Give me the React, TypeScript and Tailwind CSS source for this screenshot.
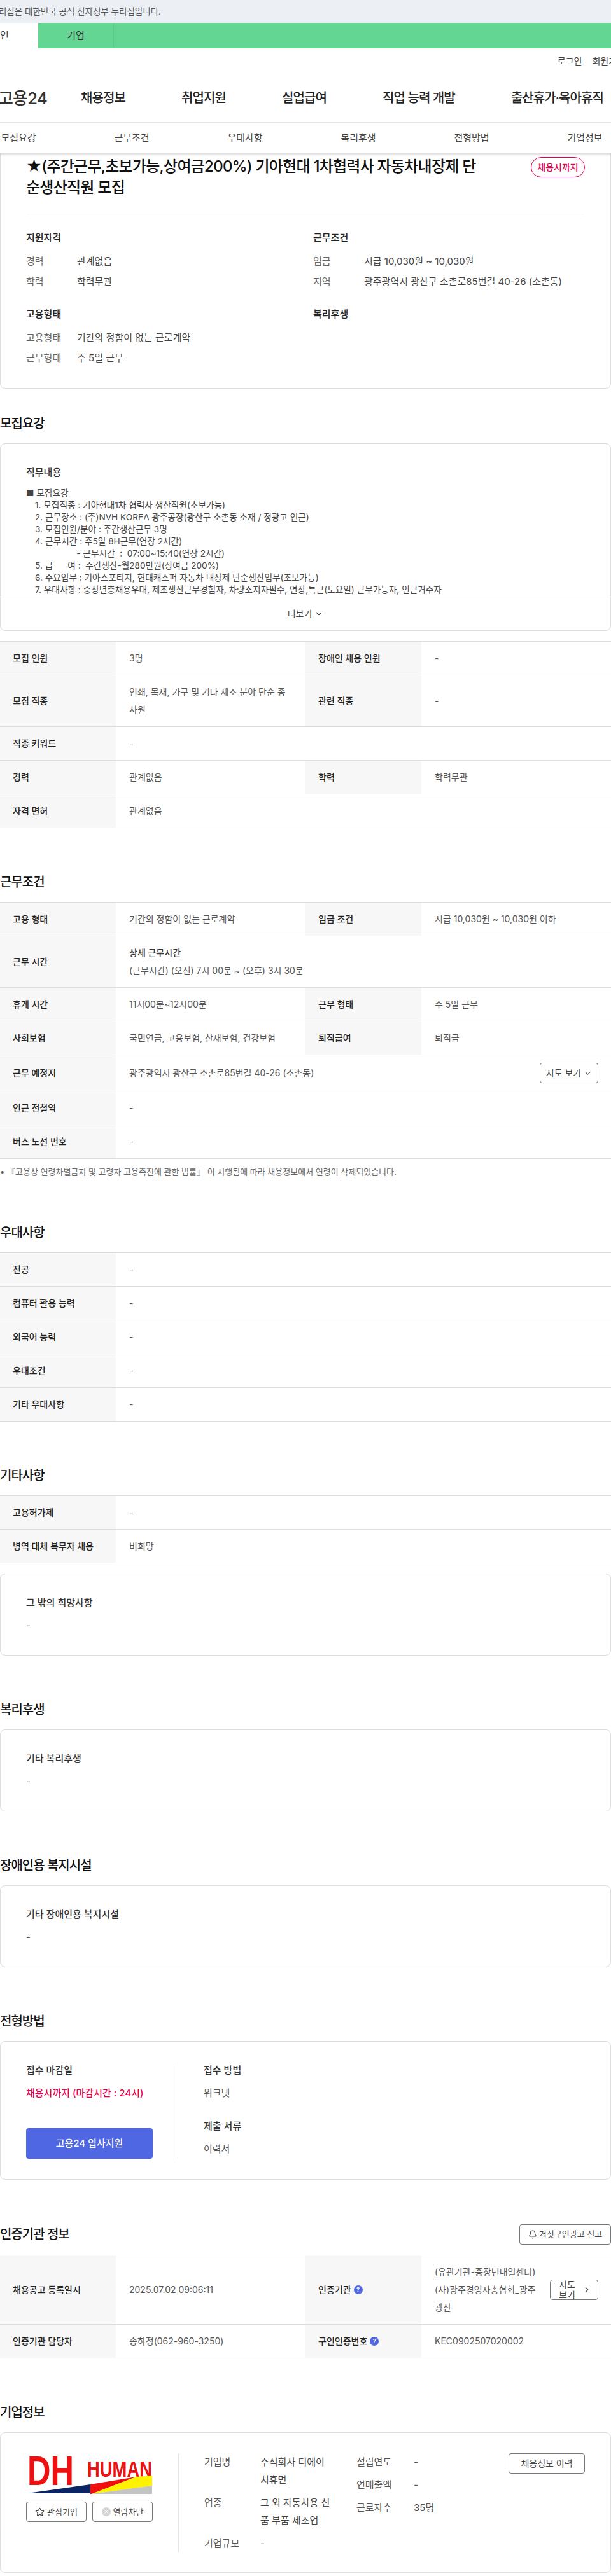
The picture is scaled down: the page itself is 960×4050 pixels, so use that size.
import type { ReactNode } from "react";
import { Bell, ChevronDown, ChevronRight, Star } from "lucide-react";

function Heading({ children, first }: { children: ReactNode; first?: boolean }) {
  return (
    <h2 className={`mb-4 flex h-[30px] items-center text-[20px] font-medium tracking-[-1px] text-[#111111] ${first ? "mt-10" : "mt-[70px]"}`}>
      {children}
    </h2>
  );
}

function Label({ children }: { children: ReactNode }) {
  return <div className="flex w-[182px] shrink-0 items-center gap-1 bg-[#f7f7f7] pl-5 text-sm font-medium text-[#222222]">{children}</div>;
}

function Value({ children, wide }: { children: ReactNode; wide?: boolean }) {
  return (
    <div className={`flex items-center pr-5 pl-[21px] text-sm leading-7 text-[#555555] ${wide ? "flex-1" : "w-[298px] shrink-0"}`}>
      {children}
    </div>
  );
}

function Row({ children, tall }: { children: ReactNode; tall?: boolean }) {
  return <div className={`flex border-b border-[#dddddd] ${tall ? "h-[81px]" : "h-[53px]"}`}>{children}</div>;
}

function Help() {
  return <span className="flex h-[14px] w-[14px] items-center justify-center rounded-full bg-[#4f67e3] text-[9px] font-bold text-white">?</span>;
}

function SimpleCard({ title }: { title: string }) {
  return (
    <div className="h-[129px] rounded-lg border border-[#dddddd] pt-8 pl-10 text-[15px] leading-[26px]">
      <p className="font-medium text-[#333333]">{title}</p>
      <p className="mt-[10px] text-[#555555]">-</p>
    </div>
  );
}

function SummaryItem({ label, value }: { label: string; value: string }) {
  return (
    <div className="flex h-8 items-center text-[15px]">
      <span className="w-20 text-[#666666]">{label}</span>
      <span className="text-[#444444]">{value}</span>
    </div>
  );
}

function CompanyLogo() {
  return (
    <svg viewBox="0 0 198 64" className="h-16 w-[198px]">
      <rect width="198" height="64" fill="#ffffff" />
      <text x="2" y="50" textLength="73" lengthAdjust="spacingAndGlyphs" fontFamily="Liberation Sans" fontWeight="700" fontSize="64" fill="#ee1111">DH</text>
      <text x="96" y="37" textLength="102" lengthAdjust="spacingAndGlyphs" fontFamily="Liberation Sans" fontWeight="700" fontSize="35" fill="#ee1111">HUMAN</text>
      <polygon points="2,63 101,49 101,63" fill="#0c2461" />
      <polygon points="101,49 173,37 103,64 101,64" fill="#f01010" />
      <polygon points="173,37 198,35 198,51 103,64" fill="#fff200" />
      <polygon points="198,51 198,64 103,64" fill="#c4c4c4" />
    </svg>
  );
}

const jobLines = [
  "1. 모집직종 : 기아현대1차 협력사 생산직원(초보가능)",
  "2. 근무장소 : (주)NVH KOREA 광주공장(광산구 소촌동 소재 / 정광고 인근)",
  "3. 모집인원/분야 : 주간생산근무 3명",
  "4. 근무시간 : 주5일 8H근무(연장 2시간)",
  "                 - 근무시간  :  07:00~15:40(연장 2시간)",
  "5. 급      여 :  주간생산-월280만원(상여금 200%)",
  "6. 주요업무 : 기아스포티지, 현대캐스퍼 자동차 내장제 단순생산업무(초보가능)",
  "7. 우대사항 : 중장년층채용우대, 제조생산근무경험자, 차량소지자필수, 연장,특근(토요일) 근무가능자, 인근거주자",
];

export default function App() {
  return (
    <div className="h-[4050px] w-[960px] overflow-hidden bg-white font-['Inter','Noto_Sans_CJK_KR',sans-serif] text-[#333333]">
      <div className="flex h-9 items-center bg-[#ecf0f5] text-[13.5px] text-[#555555]">
        <div className="flex w-[253px] justify-end whitespace-nowrap">누리집은 대한민국 공식 전자정부 누리집입니다.</div>
      </div>
      <div className="flex h-10 items-center bg-[#62d692] text-[15px]">
        <div className="-ml-[60px] flex h-full w-[120px] items-center justify-center bg-white">개인</div>
        <div className="flex h-full w-[119px] items-center justify-center border-r border-[#5acb88]">기업</div>
      </div>

      <header>
        <div className="-mr-[22px] flex h-10 items-center justify-end gap-4 text-sm text-[#444444]">
          <span>로그인</span>
          <span>회원가입</span>
        </div>
        <div className="flex h-[76px] items-center whitespace-nowrap text-[20px] font-medium tracking-[-0.9px] text-[#222222]">
          <div className="flex w-[74px] shrink-0 justify-end text-[26px] text-[#333333]">고용24</div>
          <nav className="ml-[53px] flex gap-[88px]">
            <span>채용정보</span>
            <span>취업지원</span>
            <span>실업급여</span>
            <span>직업 능력 개발</span>
            <span>출산휴가·육아휴직</span>
          </nav>
        </div>
      </header>

      <div className="relative z-10 flex h-[49px] items-center border-t border-[#e5e5e5] bg-white text-[15px] text-[#444444] shadow-[0_2px_3px_rgba(0,0,0,0.15)]">
        {["모집요강", "근무조건", "우대사항", "복리후생", "전형방법", "기업정보"].map((item, i) => (
          <span key={item} className={`w-[178px] shrink-0 text-center ${i === 0 ? "-ml-[60px]" : ""}`}>{item}</span>
        ))}
      </div>

      <section className="h-[370px] rounded-b-lg border-x border-b border-[#dddddd] px-10 pt-1">
        <div className="flex justify-between">
          <h1 className="w-[710px] text-2xl leading-[33px] font-medium tracking-[-0.75px] text-[#111111]">
            ★(주간근무,초보가능,상여금200%) 기아현대 1차협력사 자동차내장제 단순생산직원 모집
          </h1>
          <span className="mt-[2px] flex h-8 w-[85px] items-center justify-center rounded-full border border-[#e8004f] text-sm font-medium text-[#e8004f]">
            채용시까지
          </span>
        </div>
        <div className="mt-[25px] grid grid-cols-[451px_1fr] border-t border-[#eeeeee] pt-[25px]">
          <div>
            <h3 className="flex h-6 items-center text-[15px] font-medium text-[#222222]">지원자격</h3>
            <div className="mt-[9px]">
              <SummaryItem label="경력" value="관계없음" />
              <SummaryItem label="학력" value="학력무관" />
            </div>
            <h3 className="mt-[23px] flex h-6 items-center text-[15px] font-medium text-[#222222]">고용형태</h3>
            <div className="mt-[9px]">
              <SummaryItem label="고용형태" value="기간의 정함이 없는 근로계약" />
              <SummaryItem label="근무형태" value="주 5일 근무" />
            </div>
          </div>
          <div>
            <h3 className="flex h-6 items-center text-[15px] font-medium text-[#222222]">근무조건</h3>
            <div className="mt-[9px]">
              <SummaryItem label="임금" value="시급 10,030원 ~ 10,030원" />
              <SummaryItem label="지역" value="광주광역시 광산구 소촌로85번길 40-26 (소촌동)" />
            </div>
            <h3 className="mt-[23px] flex h-6 items-center text-[15px] font-medium text-[#222222]">복리후생</h3>
          </div>
        </div>
      </section>

      <Heading first>모집요강</Heading>
      <div className="h-[295px] rounded-lg border border-[#dddddd]">
        <div className="h-[240px] overflow-hidden pt-8 pl-10">
          <p className="text-[15px] leading-[26px] font-medium text-[#333333]">직무내용</p>
          <div className="mt-[10px] h-[172px] overflow-hidden text-[13.65px] leading-[19px] text-[#444444]">
            <p>■ 모집요강</p>
            {jobLines.map((line) => (
              <p key={line} className="pl-[14px] whitespace-pre">{line}</p>
            ))}
          </div>
        </div>
        <div className="flex h-[53px] items-center justify-center gap-1 border-t border-[#dddddd] text-sm text-[#444444]">
          더보기 <ChevronDown size={14} />
        </div>
      </div>

      <div className="mt-4 border-t border-[#dddddd]">
        <Row>
          <Label>모집 인원</Label>
          <Value>3명</Value>
          <Label>장애인 채용 인원</Label>
          <Value>-</Value>
        </Row>
        <Row tall>
          <Label>모집 직종</Label>
          <Value>
            <span>인쇄, 목재, 가구 및 기타 제조 분야 단순 종<br />사원</span>
          </Value>
          <Label>관련 직종</Label>
          <Value>-</Value>
        </Row>
        <Row>
          <Label>직종 키워드</Label>
          <Value wide>-</Value>
        </Row>
        <Row>
          <Label>경력</Label>
          <Value>관계없음</Value>
          <Label>학력</Label>
          <Value>학력무관</Value>
        </Row>
        <Row>
          <Label>자격 면허</Label>
          <Value wide>관계없음</Value>
        </Row>
      </div>

      <Heading>근무조건</Heading>
      <div className="border-t border-[#dddddd]">
        <Row>
          <Label>고용 형태</Label>
          <Value>기간의 정함이 없는 근로계약</Value>
          <Label>임금 조건</Label>
          <Value>시급 10,030원 ~ 10,030원 이하</Value>
        </Row>
        <Row tall>
          <Label>근무 시간</Label>
          <Value wide>
            <div>
              <p className="font-medium text-[#333333]">상세 근무시간</p>
              <p>(근무시간) (오전) 7시 00분 ~ (오후) 3시 30분</p>
            </div>
          </Value>
        </Row>
        <Row>
          <Label>휴게 시간</Label>
          <Value>11시00분~12시00분</Value>
          <Label>근무 형태</Label>
          <Value>주 5일 근무</Value>
        </Row>
        <Row>
          <Label>사회보험</Label>
          <Value>국민연금, 고용보험, 산재보험, 건강보험</Value>
          <Label>퇴직급여</Label>
          <Value>퇴직금</Value>
        </Row>
        <div className="flex h-[57px] border-b border-[#dddddd]">
          <Label>근무 예정지</Label>
          <Value wide>
            <span className="flex-1">광주광역시 광산구 소촌로85번길 40-26 (소촌동)</span>
            <button className="flex h-8 w-[92px] items-center justify-center gap-1 rounded border border-[#777777] text-sm text-[#444444]">
              지도 보기 <ChevronDown size={13} />
            </button>
          </Value>
        </div>
        <Row>
          <Label>인근 전철역</Label>
          <Value wide>-</Value>
        </Row>
        <Row>
          <Label>버스 노선 번호</Label>
          <Value wide>-</Value>
        </Row>
      </div>
      <p className="mt-[11px] flex h-5 items-center text-[13px] text-[#666666]">• 『고용상 연령차별금지 및 고령자 고용촉진에 관한 법률』 이 시행됨에 따라 채용정보에서 연령이 삭제되었습니다.</p>

      <Heading>우대사항</Heading>
      <div className="border-t border-[#dddddd]">
        {["전공", "컴퓨터 활용 능력", "외국어 능력", "우대조건", "기타 우대사항"].map((label) => (
          <Row key={label}>
            <Label>{label}</Label>
            <Value wide>-</Value>
          </Row>
        ))}
      </div>

      <Heading>기타사항</Heading>
      <div className="border-t border-[#dddddd]">
        <Row>
          <Label>고용허가제</Label>
          <Value wide>-</Value>
        </Row>
        <Row>
          <Label>병역 대체 복무자 채용</Label>
          <Value wide>비희망</Value>
        </Row>
      </div>
      <div className="mt-4">
        <SimpleCard title="그 밖의 희망사항" />
      </div>

      <Heading>복리후생</Heading>
      <SimpleCard title="기타 복리후생" />

      <Heading>장애인용 복지시설</Heading>
      <SimpleCard title="기타 장애인용 복지시설" />

      <Heading>전형방법</Heading>
      <div className="flex h-[218px] rounded-lg border border-[#dddddd] pt-8 pl-10 text-[15px] leading-[26px]">
        <div className="h-[152px] w-[239px] border-r border-[#e5e5e5]">
          <p className="font-medium text-[#333333]">접수 마감일</p>
          <p className="mt-[10px] font-medium text-[#e8004f]">채용시까지 (마감시간 : 24시)</p>
          <button className="mt-[42px] flex h-12 w-[199px] items-center justify-center rounded bg-[#4f67e3] font-medium text-white">
            고용24 입사지원
          </button>
        </div>
        <div className="pl-10">
          <p className="font-medium text-[#333333]">접수 방법</p>
          <p className="mt-[10px] text-[#555555]">워크넷</p>
          <p className="mt-[26px] font-medium text-[#333333]">제출 서류</p>
          <p className="mt-[10px] text-[#555555]">이력서</p>
        </div>
      </div>

      <div className="mt-[70px] mb-4 flex h-8 items-center justify-between">
        <h2 className="text-[20px] font-medium tracking-[-1px] text-[#111111]">인증기관 정보</h2>
        <button className="flex h-8 w-[144px] items-center justify-center gap-[3px] rounded border border-[#777777] text-[13px] text-[#444444]">
          <Bell size={14} /> 거짓구인광고 신고
        </button>
      </div>
      <div className="border-t border-[#dddddd]">
        <div className="flex h-[109px] border-b border-[#dddddd]">
          <Label>채용공고 등록일시</Label>
          <Value>2025.07.02 09:06:11</Value>
          <Label>인증기관 <Help /></Label>
          <Value>
            <span className="w-[172px] shrink-0">(유관기관-중장년내일센터) (사)광주경영자총협회_광주 광산</span>
            <button className="ml-[9px] flex h-8 w-[76px] shrink-0 items-center justify-center rounded border border-[#777777] text-sm leading-4 text-[#444444]">
              <span className="w-8">지도 보기</span>
              <ChevronRight size={14} className="ml-2" />
            </button>
          </Value>
        </div>
        <Row>
          <Label>인증기관 담당자</Label>
          <Value>송하정(062-960-3250)</Value>
          <Label>구인인증번호 <Help /></Label>
          <Value>KEC0902507020002</Value>
        </Row>
      </div>

      <Heading>기업정보</Heading>
      <div className="flex h-[221px] rounded-lg border border-[#dddddd] pt-8 pr-10 pl-10 text-[15px] leading-7">
        <div className="w-[199px] shrink-0">
          <CompanyLogo />
          <div className="mt-3 flex gap-[9px] text-[13px] text-[#444444]">
            <button className="flex h-8 w-[95px] items-center justify-center gap-1 rounded border border-[#777777]">
              <Star size={15} /> 관심기업
            </button>
            <button className="flex h-8 w-[95px] items-center justify-center gap-1 rounded border border-[#777777]">
              <svg viewBox="0 0 14 14" className="h-[14px] w-[14px]">
                <circle cx="7" cy="7" r="7" fill="#d5d5d5" />
                <path d="M4.5 4.5l5 5M9.5 4.5l-5 5" stroke="#ffffff" strokeWidth="1" />
              </svg>
              열람차단
            </button>
          </div>
        </div>
        <div className="ml-10 h-[156px] border-l border-[#e5e5e5] pl-10">
          <dl className="grid w-[199px] grid-cols-[88px_111px] gap-y-2 text-[#555555]">
            <dt>기업명</dt>
            <dd className="text-[#444444]">주식회사 디에이<br />치휴먼</dd>
            <dt>업종</dt>
            <dd className="text-[#444444]">그 외 자동차용 신<br />품 부품 제조업</dd>
            <dt>기업규모</dt>
            <dd>-</dd>
          </dl>
        </div>
        <dl className="ml-10 grid h-fit grid-cols-[90px_auto] gap-y-2 text-[#555555]">
          <dt>설립연도</dt>
          <dd>-</dd>
          <dt>연매출액</dt>
          <dd>-</dd>
          <dt>근로자수</dt>
          <dd>35명</dd>
        </dl>
        <button className="ml-auto flex h-8 w-[120px] items-center justify-center rounded border border-[#777777] text-sm text-[#444444]">
          채용정보 이력
        </button>
      </div>
    </div>
  );
}
